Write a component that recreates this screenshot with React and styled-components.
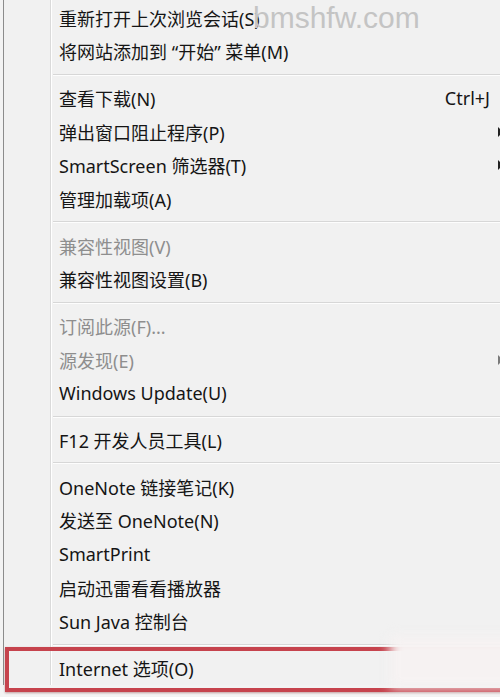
import React from 'react';
import styled, { createGlobalStyle } from 'styled-components';

const GlobalStyle = createGlobalStyle`
  html, body {
    margin: 0;
    padding: 0;
    background: #f1f1f1;
  }
`;

const Page = styled.div`
  position: relative;
  width: 500px;
  height: 697px;
  overflow: hidden;
  background: #f3f3f3;
  font-family: "Noto Sans", "Noto Sans CJK SC", sans-serif;
`;

// 菜单主体：左侧边框 + 图标栏分隔竖线
const Menu = styled.div`
  margin-left: 3px;
  width: 497px;
  padding-top: 1px;
  display: flex;
  flex-direction: column;
  border-left: 1px solid #8c8c8c;
  box-sizing: border-box;
  background:
    linear-gradient(to right, transparent 46px, #dadada 46px, #dadada 47px, #ffffff 47px, #ffffff 48px, transparent 48px),
    #f1f1f1;
`;

const Item = styled.div`
  position: relative;
  display: flex;
  align-items: center;
  height: 33.6px;
  padding-left: 55px;
  font-size: 18px;
  color: ${(p) => (p.$disabled ? '#8e8e8e' : '#151515')};
  white-space: nowrap;

  ${(p) =>
    p.$marked &&
    `
    &::after {
      content: '';
      position: absolute;
      left: 1px;
      right: -20px;
      top: -4px;
      bottom: -7px;
      border: 4px solid #c6434d;
      border-right: none;
      box-shadow: 0 1px 2px rgba(120, 30, 30, 0.4);
    }
  `}
`;

const Label = styled.span`
  flex: 1;
`;

const Shortcut = styled.span`
  margin-right: 10px;
`;

// 子菜单箭头，贴着菜单右边缘被裁掉一半
const SubArrow = styled.span`
  width: 0;
  height: 0;
  margin-right: -3px;
  border-top: 5px solid transparent;
  border-bottom: 5px solid transparent;
  border-left: 5px solid ${(p) => (p.$disabled ? '#7a7a7a' : '#222')};
`;

const Separator = styled.div`
  height: 13.2px;
  display: flex;
  align-items: center;
  padding-left: 49px;

  &::before {
    content: '';
    flex: 1;
    height: 1px;
    background: #d7d7d7;
    border-bottom: 1px solid #fdfdfd;
  }
`;

const Watermark = styled.div`
  position: absolute;
  left: 253px;
  top: 3px;
  font-family: "Liberation Sans", Arial, sans-serif;
  font-size: 30px;
  line-height: 30px;
  color: #c4c4c4;
  pointer-events: none;
`;

const Smudge = styled.div`
  position: absolute;
  left: 390px;
  top: 636px;
  width: 130px;
  height: 52px;
  background: #f6f2f2;
  filter: blur(6px);
  pointer-events: none;
`;

const items = [
  { label: '重新打开上次浏览会话(S)' },
  { label: '将网站添加到 “开始” 菜单(M)' },
  { sep: true },
  { label: '查看下载(N)', shortcut: 'Ctrl+J' },
  { label: '弹出窗口阻止程序(P)', sub: true },
  { label: 'SmartScreen 筛选器(T)', sub: true },
  { label: '管理加载项(A)' },
  { sep: true },
  { label: '兼容性视图(V)', disabled: true },
  { label: '兼容性视图设置(B)' },
  { sep: true },
  { label: '订阅此源(F)...', disabled: true },
  { label: '源发现(E)', disabled: true, sub: true },
  { label: 'Windows Update(U)' },
  { sep: true },
  { label: 'F12 开发人员工具(L)' },
  { sep: true },
  { label: 'OneNote 链接笔记(K)' },
  { label: '发送至 OneNote(N)' },
  { label: 'SmartPrint' },
  { label: '启动迅雷看看播放器' },
  { label: 'Sun Java 控制台' },
  { sep: true },
  { label: 'Internet 选项(O)', marked: true },
];

export default function App() {
  return (
    <>
      <GlobalStyle />
      <Page>
        <Menu>
          {items.map((it, i) =>
            it.sep ? (
              <Separator key={i} />
            ) : (
              <Item key={i} $disabled={it.disabled} $marked={it.marked}>
                <Label>{it.label}</Label>
                {it.shortcut && <Shortcut>{it.shortcut}</Shortcut>}
                {it.sub && <SubArrow $disabled={it.disabled} />}
              </Item>
            )
          )}
        </Menu>
        <Watermark>bmshfw.com</Watermark>
        <Smudge />
      </Page>
    </>
  );
}
